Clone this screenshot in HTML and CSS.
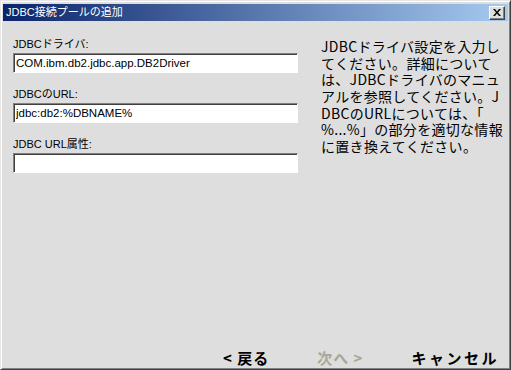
FILE: index.html
```html
<!DOCTYPE html>
<html lang="ja">
<head>
    <meta charset="UTF-8">
    <title>JDBC接続プールの追加</title>
    <link rel="stylesheet" href="styles.css">
</head>
<body>
    <div class="window">
        <div class="title-bar">
            <span class="title">JDBC接続プールの追加</span>
            <button class="close-btn" aria-label="閉じる">
                <svg width="8" height="7" viewBox="0 0 8 7">
                    <path d="M0 0h2l2 2.5L6 0h2L5 3.5 8 7H6L4 4.5 2 7H0l3-3.5z" fill="#000"/>
                </svg>
            </button>
        </div>

        <div class="content">
            <div class="form">
                <label class="field-label" for="driver">JDBCドライバ:</label>
                <input class="field-input" type="text" id="driver" value="COM.ibm.db2.jdbc.app.DB2Driver">

                <label class="field-label" for="url">JDBCのURL:</label>
                <input class="field-input" type="text" id="url" value="jdbc:db2:%DBNAME%">

                <label class="field-label" for="props">JDBC URL属性:</label>
                <input class="field-input" type="text" id="props" value="">
            </div>

            <div class="help">
                <div class="help-line">JDBCドライバ設定を入力し</div>
                <div class="help-line">てください。詳細について</div>
                <div class="help-line">は、JDBCドライバのマニュ</div>
                <div class="help-line">アルを参照してください。J</div>
                <div class="help-line">DBCのURLについては、「</div>
                <div class="help-line">%...%」の部分を適切な情報</div>
                <div class="help-line">に置き換えてください。</div>
            </div>
        </div>

        <div class="footer">
            <button class="nav-btn">&lt; 戻る</button>
            <button class="nav-btn" disabled>次へ &gt;</button>
            <button class="nav-btn nav-cancel">キャンセル</button>
        </div>
    </div>
</body>
</html>
```

FILE: styles.css
```css
html, body {
    margin: 0;
    padding: 0;
}

body {
    width: 511px;
    height: 370px;
    background-color: #dedede;
    font-family: 'Liberation Sans', 'Noto Sans CJK JP', sans-serif;
}

/* Window frame */
.window {
    box-sizing: border-box;
    width: 511px;
    height: 370px;
    display: flex;
    flex-direction: column;
    padding: 3px 2px 2px 2px;
    border: 1px solid;
    border-color: #e6e6e6 #404040 #404040 #e6e6e6;
    box-shadow: inset 1px 1px #ffffff, inset -1px -1px #808080;
}

/* Title bar */
.title-bar {
    height: 17px;
    display: flex;
    align-items: center;
    justify-content: space-between;
    padding: 0 3px 0 3px;
    background: linear-gradient(to right, #0a246a, #a6caf0);
}

.title {
    color: #ffffff;
    font-size: 11px;
    line-height: 17px;
}

.close-btn {
    width: 16px;
    height: 14px;
    padding: 0;
    display: flex;
    align-items: center;
    justify-content: center;
    background-color: #dedede;
    border: 1px solid;
    border-color: #ffffff #404040 #404040 #ffffff;
    box-shadow: inset -1px -1px #808080;
}

/* Main area */
.content {
    flex: 1;
    display: flex;
    gap: 23px;
    padding: 17px 0 0 10px;
}

.form {
    width: 285px;
    display: flex;
    flex-direction: column;
}

.field-label {
    font-size: 11px;
    line-height: 13px;
    color: #000000;
    margin-top: 15px;
}

.field-label:first-child {
    margin-top: 0;
}

.field-input {
    box-sizing: border-box;
    height: 20px;
    margin: 2px 0 0 0;
    padding: 0 2px;
    font-family: 'Liberation Sans', 'Noto Sans CJK JP', sans-serif;
    font-size: 11.5px;
    color: #000000;
    background-color: #ffffff;
    border: 1px solid;
    border-color: #808080 #ffffff #ffffff #808080;
    box-shadow: inset 1px 1px #404040;
    outline: none;
}

.help {
    font-family: 'Noto Sans CJK JP', sans-serif;
    font-size: 14px;
    letter-spacing: 0.3px;
    color: #000000;
    white-space: nowrap;
}

.help-line {
    height: 16.67px;
    line-height: 16.67px;
}

/* Wizard navigation */
.footer {
    display: flex;
    justify-content: flex-end;
    gap: 48px;
    padding: 0 9px 0 0;
}

.nav-btn {
    padding: 0;
    background: none;
    border: none;
    font-family: 'Noto Sans CJK JP', sans-serif;
    font-weight: bold;
    font-size: 15px;
    line-height: 18px;
    letter-spacing: 1px;
    color: #000000;
}

.nav-btn:disabled {
    color: #a9a697;
}

.nav-cancel {
    letter-spacing: 2.5px;
}
```
